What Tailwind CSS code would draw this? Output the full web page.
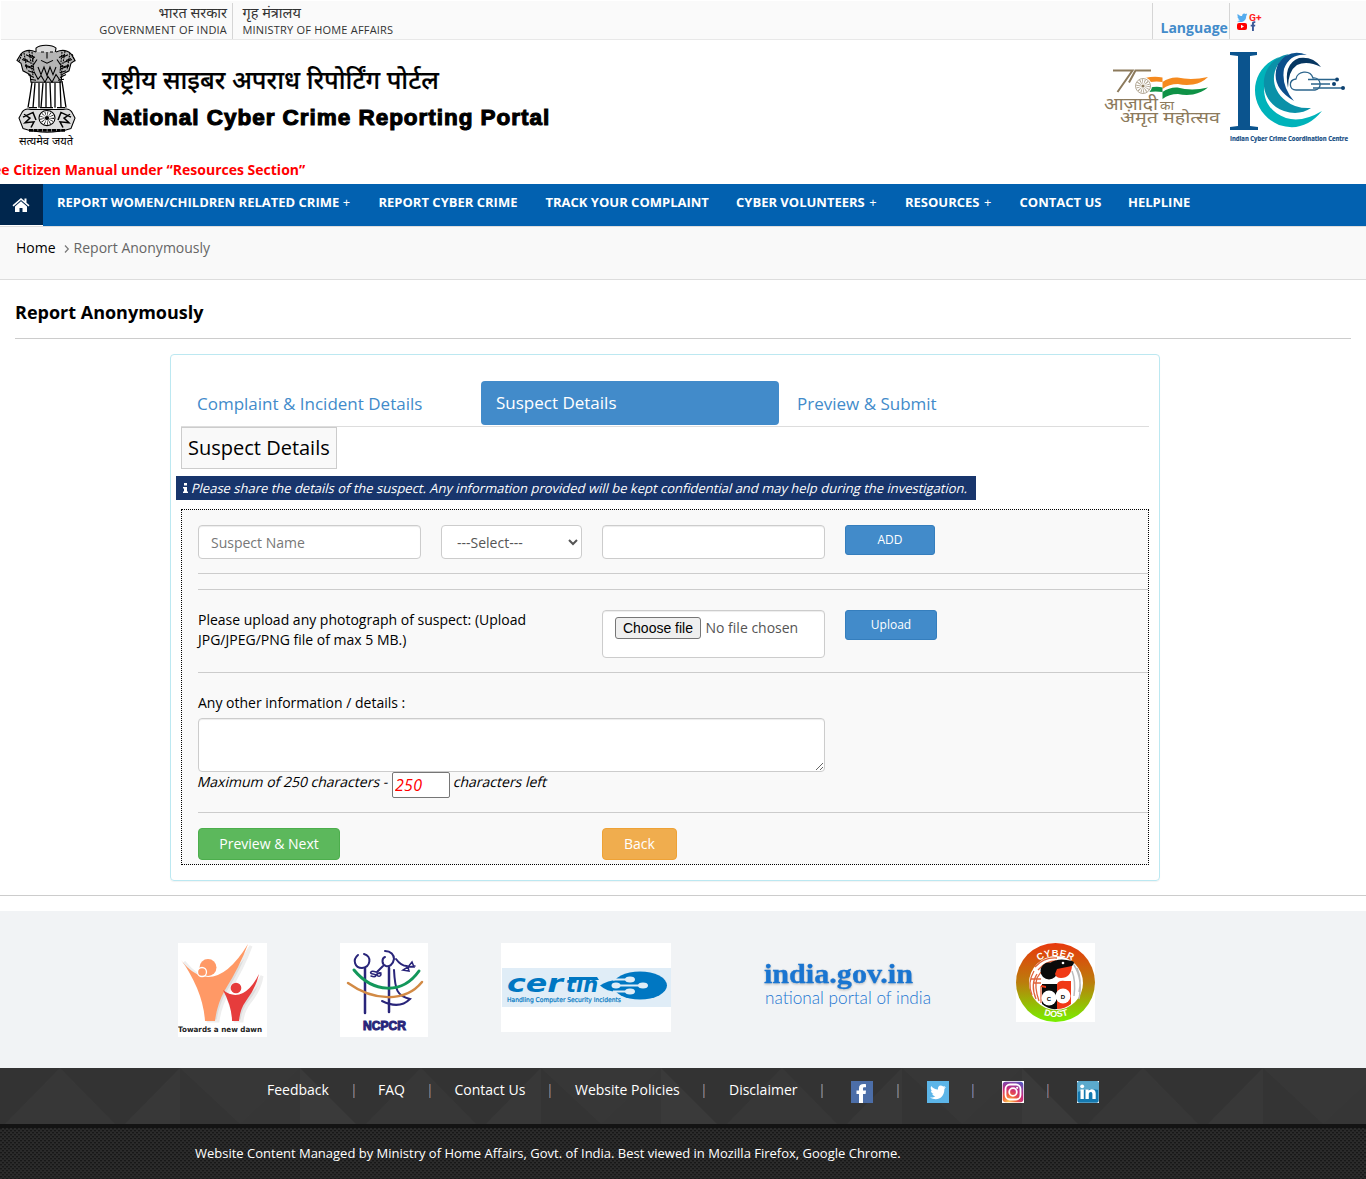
<!DOCTYPE html>
<html lang="en">
<head>
<meta charset="utf-8">
<title>National Cyber Crime Reporting Portal</title>
<script src="https://cdn.jsdelivr.net/npm/@tailwindcss/browser@4"></script>
</head>
<body class="bg-white font-['Open_Sans','Noto_Sans',sans-serif] text-sm text-black overflow-x-hidden">

<!-- Government strip -->
<div class="h-10 ml-px mt-0 border-b border-[#e8e8e8] bg-[#fafafa] flex text-[#333] text-[11px] leading-[17px] border-t border-t-white">
  <div class="w-[232px] mt-[2px] h-9 border-r border-[#d5d5d5] pr-[5px] text-right pt-[1px] whitespace-nowrap">
    <div class="text-[14.500px] leading-[17px]">भारत सरकार</div>
    <div class="tracking-[0.2px]">GOVERNMENT OF INDIA</div>
  </div>
  <div class="mt-[2px] pt-[1px] pl-[9.500px] w-[920px] border-r border-[#d5d5d5] h-9">
    <div class="text-[14.500px] leading-[17px]">गृह मंत्रालय</div>
    <div class="tracking-[0.2px]">MINISTRY OF HOME AFFAIRS</div>
  </div>
  <div class="mt-[2px] w-[77px] h-9 border-r border-[#d5d5d5] pl-[7.500px] pt-[15px] text-sm leading-5 font-bold text-[#428bca]">Language</div>
  <svg class="ml-[7px] mt-[11px]" width="26" height="20" viewBox="0 0 26 20">
    <path fill="#55acee" transform="translate(0 0.5) scale(.46)" d="M22 3.500l-2 1c.8-.6 1.500-1.500 1.800-2.500l-3 1A5 5 0 0 0 11 7.500C7 7.500 4 5.500 1.500 3c-1.200 2-.6 5 1.500 6.200L1 8.700c0 2.300 1.600 4.200 3.700 4.700H2.600c.6 1.900 2.300 3 4.400 3.100-2 1.500-4.300 2.200-7 2C9 23.500 20 19 20 8z"/>
    <text x="12" y="8.500" font-family="Roboto" font-weight="700" font-size="9.500" fill="#f22" textLength="12.500" lengthAdjust="spacingAndGlyphs">G+</text>
    <rect x="0" y="11" width="10" height="7" rx="2" fill="#f00"/><path d="M4 12.800l3 1.700-3 1.700z" fill="#fff"/>
    <path fill="#3b5998" d="M15 19v-4.500h-1.300v-1.800H15v-1.200c0-1.700 1-2.500 3.300-2.200v1.700c-1.200 0-1.400.2-1.400.8v.9h1.400l-.2 1.800h-1.200V19z"/>
  </svg>
</div>

<!-- Masthead -->
<header class="h-[117px] flex">
  <svg class="ml-[14px] mt-[3px] shrink-0" width="66" height="110" viewBox="0 0 66 110">
    <g fill="none" stroke="#000" stroke-width="1.100" transform="translate(0 .4) scale(1 .945)">
      <path d="M22 5q3-3 10-3t10 3l-1 6 2 5-3 6-5 2h-7l-5-2-3-6 2-5z" fill="#ddd"/>
      <path d="M22 9q-9-4-15 2l-4 7 4 3 2 8 7 4 1 8h30l1-8 7-4 2-8 4-3-4-7q-6-6-15-2" fill="#b5b5b5"/>
      <path d="M12 12l6 3m-10 2 8 3m-5 4 9 3m3-10-5 8m2-11-2 5M54 12l-6 3m10 2-8 3m5 4-9 3m-3-10 5 8M27 9h3m6 0h3M33 9v7m-6 2 6 3 6-3M24 25l3 8 3-8 3 9 3-9 3 8 3-8M20 30l4 8 3-4 4 7 3-6 4 6 4-8 4 6"/>
      <path d="M9 16l5 2m-3 5 6 2m-3 4 6 2m-5-19 6 3M57 16l-5 2m3 5-6 2m3 4-6 2m5-19-6 3M14 33l6 3m-4 2 6 1m24-3 6-3m-8 6 6-1"/>
      <path d="M5 19l3-8M10 10l3 18M15 8l4 26M18 9l2 22M61 19l-3-8M56 10l-3 18M51 8l-4 26M48 9l-2 22" stroke-dasharray="2 1"/>
      <path d="M18 41q-2 15-4 27m7-26-2 26m6-26v26m4-26-2 26m5-26v26m4-26 1 26m4-26v26m5-28 1 28m1-28q2 14 4 28M15 68h8m3 0h13m4 0h8" stroke-width="1.300"/>
      <path d="M8 73q3-5 9-3h32q6-2 9 3l3 6-4 11q-24 8-48 0L5 79z" fill="#ddd"/>
      <circle cx="33" cy="79" r="8" fill="#fff"/><circle cx="33" cy="79" r="4.500" stroke-dasharray=".6 1.500" stroke-width="5"/><circle cx="33" cy="79" r="1.500" fill="#000"/>
      <path d="M10 75l6 4-5 5 9-1-3 6m-8-11 10-5 3 8M56 75l-6 4 5 5-9-1 3 6m8-11-10-5-3 8" stroke-width="1.500"/>
      <path d="M15 92h36" stroke-width="3" stroke-dasharray="4 .6"/>
    </g>
    <text x="5" y="102" font-size="11" font-family="Noto Sans, sans-serif" textLength="54" lengthAdjust="spacingAndGlyphs">सत्यमेव जयते</text>
  </svg>
  <div class="ml-[22px] mt-[20px] w-[1002px]">
    <div class="text-[25.300px] leading-[38px] font-medium whitespace-nowrap [-webkit-text-stroke:0.2px_#000]">राष्ट्रीय साइबर अपराध रिपोर्टिंग पोर्टल</div>
    <div class="ml-px mt-[3px] text-[22.500px] leading-[34px] font-bold font-['Liberation_Sans',sans-serif] [-webkit-text-stroke:1.100px_#000] tracking-[0.970px] whitespace-nowrap">National Cyber Crime Reporting Portal</div>
  </div>
  <svg class="mt-6 shrink-0" width="118" height="66" viewBox="0 0 118 66">
    <path d="M9 6.500h19.500L13.500 28M47 6.500H31.500L25 18.500" fill="none" stroke="#8c7a5c" stroke-width="2"/>
    <path d="M41 14q9-2 17.500-.5V18q7-5 15-4.500 14 3 30.500-.5-6 6-15 7.500-8 1-15-.5-9 0-15.500 5V18q-6-1-12 0z" fill="#f58a1f"/>
    <path d="M45 24q7-2 13.500-.5V28q7-5 15-4.500 14 4 30.500 0-6 5-15 7-8 1-15-.5-9 0-15.500 5V28q-7-1-14 0z" fill="#0f9246"/>
    <circle cx="39" cy="22" r="9" fill="#fff"/><circle cx="39" cy="22" r="7.500" fill="#fff" stroke="#b5aa98" stroke-width="1"/><circle cx="39" cy="22" r="4.500" fill="none" stroke="#a89c86" stroke-width="4.500" stroke-dasharray=".7 1.300"/><circle cx="39" cy="22" r="1.600" fill="#8c7a5c"/>
    <g fill="#8c7a5c" font-family="Noto Sans, sans-serif">
      <text x="0" y="45.500" font-size="17" textLength="54" lengthAdjust="spacingAndGlyphs">आज़ादी</text>
      <text x="56" y="45.500" font-size="12" textLength="14" lengthAdjust="spacingAndGlyphs">का</text>
      <text x="16" y="59" font-size="16.500" textLength="100" lengthAdjust="spacingAndGlyphs">अमृत महोत्सव</text>
    </g>
  </svg>
  <svg class="ml-[7px] mt-[10px] shrink-0" width="122" height="96" viewBox="0 0 122 96">
    <path d="M1 2h27v3l-7 1v70l8 1v3H1v-3l8-1V6L1 5z" fill="#0b548e"/>
    <path d="M50 7C17 20 19 62 50 75q25 8 43-14-20 12-36 7C28 58 30 26 50 7z" fill="#00b3ba"/>
    <path d="M60 4C30 9 25 50 55 61q15 5 27-3-15 1-25-7C39 37 42 15 60 4z" fill="#0a91a8"/>
    <path d="M78 5Q60-2 49 14q-9 22 16 37-13-15-10-32Q61 3 78 5z" fill="#0c4f8c"/>
    <path d="M92 17Q84 6 70 8 54 14 59 38q0-17 9-23 10-5 24 2z" fill="#063661"/>
    <path d="M67 40c-7 0-8-10 0-11 1-8 14-10 17-1 8-1 10 11 2 12z" fill="#fff" stroke="#2b648c" stroke-width="1.300"/>
    <path d="M79 29.500h27M82 34h19M84 38h29" stroke="#2b648c" fill="none" stroke-width="1.300"/>
    <g fill="#0c4070"><circle cx="108" cy="29.500" r="2"/><circle cx="105" cy="34" r="2"/><circle cx="114" cy="38" r="2"/></g>
    <text x="1" y="91" font-family="Open Sans" font-size="6.600" font-weight="700" fill="#174f85" stroke="#174f85" stroke-width=".2" textLength="118" lengthAdjust="spacingAndGlyphs">Indian Cyber Crime Coordination Centre</text>
  </svg>
</header>
<div class="h-[27px] overflow-hidden pt-[3px] whitespace-nowrap font-bold text-sm leading-5 text-[#f00]"><span class="-ml-[7px]">ee Citizen Manual under “Resources Section”</span></div>

<!-- Main navigation -->
<nav class="h-[42px] bg-[#0261b0] flex text-white text-[13px] font-bold leading-[18px] whitespace-nowrap">
  <a class="w-[43px] bg-[#00264d] border-b border-white flex justify-center pt-[13px] pr-px">
    <svg width="18" height="16" viewBox="0 0 18 16" fill="#fff"><path d="M9 1 0.500 8.300l1 1.100L9 3l7.500 6.400 1-1.100-3-2.600V1.500h-2v2.600z"/><path d="M9 4.300 3 9.400V15h4.500v-4h3v4H15V9.400z"/></svg>
  </a>
  <a class="pl-[14px] pt-[9px] w-[321.500px]">REPORT WOMEN/CHILDREN RELATED CRIME <span class="font-normal">+</span></a>
  <a class="pl-[14px] pt-[9px] w-[167px]">REPORT CYBER CRIME</a>
  <a class="pl-[14px] pt-[9px] w-[190.500px]">TRACK YOUR COMPLAINT</a>
  <a class="pl-[14px] pt-[9px] w-[169px]">CYBER VOLUNTEERS <span class="font-normal ml-px">+</span></a>
  <a class="pl-[14px] pt-[9px] w-[114.500px]">RESOURCES <span class="font-normal ml-px">+</span></a>
  <a class="pl-[14px] pt-[9px] w-[108.500px]">CONTACT US</a>
  <a class="pl-[14px] pt-[9px]">HELPLINE</a>
</nav>

<div class="h-[54px] bg-[#f9f9f9] border-y border-[#ddd] pl-4 pt-[11px] leading-5 flex">
  <span>Home</span>
  <svg class="ml-2 mt-[7px] mr-1" width="6" height="8" viewBox="0 0 6 8"><path d="M1 .5l3.300 3.500L1 7.500" stroke="#777" fill="none" stroke-width="1.200"/></svg>
  <span class="text-[#666]">Report Anonymously</span>
</div>

<main>
  <h1 class="mx-[15px] h-[59px] border-b border-[#ccc] pt-5 text-lg leading-[25px] font-bold">Report Anonymously</h1>

  <section class="mt-[15px] ml-[170px] w-[990px] h-[527px] border border-[#bce8f1] rounded px-[10px] pt-[26px] shadow-[0_1px_1px_rgba(0,0,0,.05)]">
    <div class="h-[46px] border-b border-[#ddd] flex text-[17px] leading-6 text-[#428bca]">
      <a class="w-[300px] pl-4 pt-[11px]">Complaint &amp; Incident Details</a>
      <a class="w-[298px] h-11 rounded bg-[#428bca] text-white pl-[15px] pt-[10px]">Suspect Details</a>
      <a class="pl-[18px] pt-[11px]">Preview &amp; Submit</a>
    </div>
    <h2 class="w-[156px] h-[42px] border border-[#ccc] bg-[#f9f9f9] pl-[6px] pt-[6px] text-xl leading-7 whitespace-nowrap">Suspect Details</h2>
    <div class="-ml-[5px] mt-[7px] w-[800px] h-6 bg-[#18356c] text-white text-[13px] leading-6 pl-[7px] flex whitespace-nowrap">
      <svg class="mt-[7px] mr-[4px]" width="5" height="10" viewBox="0 0 5 10" fill="#fff"><path d="M1 0h3v2.500H1zM0 4h4v4.500h1V10H0V8.500h1v-3H0z"/></svg>
      <span class="-skew-x-[14deg]">Please share the details of the suspect. Any information provided will be kept confidential and may help during the investigation.</span>
    </div>

    <form class="mt-[9px] h-[356px] border border-dotted border-black bg-[#f9f9f9] pl-4 leading-5">
      <div class="h-[64px] pt-[15px] flex border-b border-[#ccc] items-start">
        <input class="w-[223px] h-[34px] rounded border border-[#ccc] bg-white px-3 placeholder:text-[#777] shadow-[inset_0_1px_1px_rgba(0,0,0,.075)]" placeholder="Suspect Name">
        <select class="ml-5 w-[141px] h-[34px] rounded border border-[#ccc] bg-white pl-[11px] pr-0 text-[#555]"><option>---Select---</option></select>
        <input class="ml-5 w-[223px] h-[34px] rounded border border-[#ccc] bg-white shadow-[inset_0_1px_1px_rgba(0,0,0,.075)]">
        <button type="button" class="ml-5 w-[90px] h-[30px] rounded-[3px] border border-[#357ebd] bg-[#428bca] text-white text-xs">ADD</button>
      </div>
      <div class="h-4 border-b border-[#ccc]"></div>
      <div class="h-[83px] pt-5 flex border-b border-[#ccc] items-start">
        <p class="w-[404px] pr-12">Please upload any photograph of suspect: (Upload JPG/JPEG/PNG file of max 5 MB.)</p>
        <div class="w-[223px] h-12 rounded border border-[#ccc] bg-white pl-3 pt-[6px] flex items-start text-[#555] shadow-[inset_0_1px_1px_rgba(0,0,0,.075)]">
          <button type="button" class="w-[86px] h-[22px] border border-[#767676] rounded-[3px] bg-[#efefef] text-black font-['Liberation_Sans',sans-serif] text-sm leading-5 whitespace-nowrap">Choose file</button>
          <span class="ml-[4.500px] mt-px">No file chosen</span>
        </div>
        <button type="button" class="ml-5 w-[92px] h-[30px] rounded-[3px] border border-[#357ebd] bg-[#428bca] text-white text-xs">Upload</button>
      </div>
      <div class="h-[140px] pt-5 border-b border-[#ccc]">
        <div>Any other information / details :</div>
        <textarea class="block mt-[5px] w-[627px] h-[54px] rounded border border-[#ccc] bg-white resize shadow-[inset_0_1px_1px_rgba(0,0,0,.075)]"></textarea>
        <div class="flex items-start">
          <span class="w-[194px] whitespace-nowrap -skew-x-[14deg]">Maximum of 250 characters -</span>
          <input class="w-[58px] h-[26px] border border-[#767676] rounded-[2px] bg-white text-[#f00] text-base italic px-[2px] tracking-[0.300px]" value="250">
          <span class="ml-1 -skew-x-[14deg]">characters left</span>
        </div>
      </div>
      <div class="flex pt-[15px]">
        <button type="button" class="w-[142px] h-8 rounded border border-[#4cae4c] bg-[#5cb85c] text-white">Preview &amp; Next</button>
        <button type="button" class="ml-[262px] w-[75px] h-8 rounded border border-[#eea236] bg-[#f0ad4e] text-white">Back</button>
      </div>
    </form>
  </section>
  <hr class="mt-[14px] border-t border-[#ccc]">
</main>

<!-- Partner sites -->
<div class="mt-[15px] h-[157px] bg-[#f1f3f5] pl-[178px] pt-8 flex items-start">
  <svg class="shrink-0" width="89" height="94" viewBox="0 0 89 94">
    <rect width="89" height="94" fill="#fff"/>
    <g transform="translate(3 2)" fill="#ddd" stroke="#eee" stroke-width="3"><path d="M27 76L22 49Q13 27 3 17q13 16 27 17Q50 34 70 1 62 23 47 47q-8 14-10 29z"/><path d="M54 76q-2-10-9-28 8 8 19 3 9-5 17-20-2 14-13 27-6 8-7 18z"/></g>
    <path d="M27 78Q26 62 19 45 11 27 3 17q12 16 27 17Q50 34 70 1 62 23 47 47q-8 14-10 31z" fill="#ff9966"/>
    <circle cx="30" cy="24.500" r="8.500" fill="#ff9966"/><circle cx="24" cy="29" r="4.500" fill="#ff9966" stroke="#fff" stroke-width="1.300"/>
    <path d="M54 78q0-14-9-31 10 8 20 3 9-5 16-19-3 14-13 27-6 8-7 20z" fill="#e63c3c"/><circle cx="58" cy="45" r="5.300" fill="#e63c3c"/>
    <text x="0" y="88.500" font-family="DejaVu Sans" font-size="7.500" font-weight="700" fill="#222" textLength="84" lengthAdjust="spacingAndGlyphs">Towards a new dawn</text>
  </svg>
  <svg class="ml-[73px] shrink-0" width="88" height="94" viewBox="0 0 88 94">
    <rect width="88" height="94" fill="#fff"/>
    <g fill="none" stroke="#29257a" stroke-width="2" stroke-linecap="round">
      <path d="M18 12c-6 5-3 13 4 13 9-1 10-12 2-14M45 8c6 0 9 4 9 8-1 6-5 8-8 7-5-2-4-8-1-9M54 27c1 20 3 26 16 29-8 8-18 7-28 2M43 23l-6 6M56 16q5 7 11 7"/>
      <path d="M36 29c-6-2-7 2-3 2 5 1 3 4-2 2m10-3c-5-1-5 4-1 3 3-2-1-4-5-1M68 24l4-5 2 5zM68 24l-5 3 6 1zM68 24l7-1" stroke-width="1.500"/>
      <path d="M25 25v45M49 25v44" stroke-width="2.500"/>
    </g>
    <path d="M14 27C33 50 62 52 79 28" fill="none" stroke="#13975b" stroke-width="3" stroke-linecap="round"/>
    <path d="M8 40C33 58 65 60 82 39" fill="none" stroke="#d28a45" stroke-width="2.500" stroke-linecap="round"/>
    <text x="23" y="87" font-family="Liberation Sans" font-size="12" font-weight="700" fill="#29257a" stroke="#29257a" stroke-width="1" textLength="43" lengthAdjust="spacingAndGlyphs">NCPCR</text>
  </svg>
  <svg class="ml-[73px] shrink-0" width="170" height="89" viewBox="0 0 170 89">
    <rect width="170" height="89" fill="#fff"/><rect x="1" y="25" width="169" height="39" fill="#e0edf7"/>
    <g fill="#0077c2" font-family="DejaVu Sans"><text x="6" y="49" font-size="24" font-weight="700" font-style="italic" textLength="56" lengthAdjust="spacingAndGlyphs">cer</text><text x="65" y="49" font-size="22" font-weight="700" font-style="italic" textLength="32" lengthAdjust="spacingAndGlyphs">tın</text>
    <path d="M68 34h28l2 3H68z"/>
    <text x="6" y="59" font-size="6.500" font-family="DejaVu Sans" stroke="#0077c2" stroke-width=".2" textLength="114" lengthAdjust="spacingAndGlyphs">Handling Computer Security Incidents</text></g>
    <ellipse cx="139" cy="42.500" rx="27" ry="14" fill="#0077c2"/><path d="M99 42.500q12-8 26-4v9q-16 4-26-5z" fill="#0077c2"/>
    <g stroke="#e0edf7" stroke-width="2" fill="#e0edf7"><path d="M112 36.500h17M116 42.500h26M112 48.500h17"/><ellipse cx="129" cy="36.500" rx="4" ry="2"/><ellipse cx="142" cy="42.500" rx="4" ry="2"/><ellipse cx="129" cy="48.500" rx="4" ry="2"/><ellipse cx="115" cy="42.500" rx="3.500" ry="2"/></g>
  </svg>
  <svg class="ml-[92px] mt-[14px] shrink-0" width="170" height="55" viewBox="0 0 170 55" fill="#1a75d1">
    <text x="1" y="26" class="drop-shadow-[0px_1px_1px_rgba(0,0,0,.25)]" font-family="Liberation Serif" font-size="28" font-weight="700" stroke="#1a75d1" stroke-width=".3" textLength="149" lengthAdjust="spacingAndGlyphs">india.gov.in</text>
    <text x="2" y="47" font-family="Lato" font-weight="300" font-size="17.500" textLength="166" lengthAdjust="spacingAndGlyphs">national portal of india</text>
  </svg>
  <svg class="ml-[83px] shrink-0" width="79" height="79" viewBox="0 0 79 79">
    <defs><linearGradient id="ring" x1="0" y1="0" x2="0" y2="1"><stop offset="0" stop-color="#e8380d"/><stop offset=".5" stop-color="#bb7d0c"/><stop offset="1" stop-color="#78f000"/></linearGradient>
    <path id="arcTop" d="M9.500 41a30 28 0 0 1 60 0"/><path id="arcBot" d="M5 41a35 33 0 0 0 70 0"/></defs>
    <rect width="79" height="79" fill="#fff"/><circle cx="39.500" cy="39.500" r="39.500" fill="url(#ring)"/><circle cx="40" cy="40" r="27" fill="#fff"/>
    <g fill="none" stroke="#e0643c" stroke-width="1.300"><path d="M16 52q-5-12 2-24M20 56q-6-15 1-25M23 58q-5-14-2-23l4-6M19 24q9-10 22-9M22 27q8-9 18-9M15 36h10M17 40h8M25 60V43"/></g>
    <g fill="none" stroke="#bbb" stroke-width="1.500"><path d="M58 22q9 14 5 34M61 25q5 12 2 24M56 28q4 10 2 25"/></g>
    <circle cx="33" cy="28" r="8.500" fill="#0a0a0a"/><path d="M34 20q8-6 22-2 4 1 0 5-6 4-14 4z" fill="#0a0a0a"/><path d="M41 26l15-3q-1 12-11 12-5 0-6-4z" fill="#f03a17"/><circle cx="47" cy="20" r="1.300" fill="#fff"/>
    <path d="M26 41h15v25q-8 1-15-5z" fill="#0a0a0a"/><path d="M41 41q2-4 8-3h6v23q-6 5-14 5z" fill="#f03a17"/><path d="M25 42l5 1v2l-5-1z" fill="#f03a17"/>
    <circle cx="33" cy="55" r="7.500" fill="#fff"/><circle cx="47" cy="53" r="7.500" fill="#fff"/>
    <g font-family="Liberation Sans" font-weight="700" text-anchor="middle"><text x="33" y="57.500" font-size="6">C</text><text x="47" y="55.500" font-size="6">D</text>
    <g fill="#fff" font-size="9.500" letter-spacing=".5"><text><textPath href="#arcTop" startOffset="50%">CYBER</textPath></text><text font-size="9" letter-spacing="0"><textPath href="#arcBot" startOffset="50%">DOST</textPath></text></g></g>
  </svg>
</div>

<footer class="text-white">
  <div class="relative h-[56px] bg-[#333]">
    <svg class="absolute inset-0" width="1366" height="56">
      <defs><pattern id="tri" width="361" height="56" patternUnits="userSpaceOnUse"><path d="M5 56 60 0l55 56z" fill="#373737"/><path d="M125 56 180 0v56z" fill="#383838"/><path d="M180 0h120l-60 56z" fill="#373737"/><path d="M180 0v56h60z" fill="#343434"/><path d="M240 56 300 0v56z" fill="#363636"/><path d="M300 0l56 56h-56z" fill="#3a3a3a"/></pattern></defs>
      <rect width="1366" height="56" fill="url(#tri)"/>
    </svg>
    <div class="relative flex pl-[267px] pt-3 leading-5 whitespace-nowrap">
      <a class="w-[86px]">Feedback</a><i class="w-[2px] h-[14px] mt-1 border-l border-[#5c6f86] bg-[#7a5a48]"></i>
      <a class="w-[74px] pl-[23px]">FAQ</a><i class="w-[2px] h-[14px] mt-1 border-l border-[#5c6f86] bg-[#7a5a48]"></i>
      <a class="w-[118px] pl-[23.500px]">Contact Us</a><i class="w-[2px] h-[14px] mt-1 border-l border-[#5c6f86] bg-[#7a5a48]"></i>
      <a class="w-[152px] pl-[24px]">Website Policies</a><i class="w-[2px] h-[14px] mt-1 border-l border-[#5c6f86] bg-[#7a5a48]"></i>
      <a class="w-[116px] pl-[24px]">Disclaimer</a><i class="w-[2px] h-[14px] mt-1 border-l border-[#5c6f86] bg-[#7a6a58]"></i>
      <a class="w-[74px] pl-[27.500px] pt-px"><svg width="22" height="22" viewBox="0 0 22 22"><rect width="22" height="22" fill="#4c6ea8"/><path d="M8 22v-9H5.500V9.500H8V7c0-3 2-4.300 7-3.800v3c-2.600-.2-3 .2-3 1.500v1.800h3l-.4 3.500H12V22z" fill="#fff"/></svg></a><i class="w-[2px] h-[14px] mt-1 border-l border-[#5c6f86] bg-[#7a6a58]"></i>
      <a class="w-[73px] pl-[27.500px] pt-px"><svg width="22" height="22" viewBox="0 0 22 22"><rect width="22" height="22" fill="#5cb5e8"/><path d="M19 6l-2 .5L18.300 5l-2 .6C13 3 10.500 5.500 11 8.500 8 8.500 6 7 4.200 5c-1 2-.4 4 1.100 5L4 9.600c0 2 1 3 2.700 3.500H5.300c.5 1.400 1.600 2 3 2.200-1.500 1-3 1.500-5.300 1.200C10 20.500 17.500 17 17.400 8z" fill="#fff"/></svg></a><i class="w-[2px] h-[14px] mt-1 border-l border-[#5c6f9a] bg-[#6a5a58]"></i>
      <a class="w-[73px] pl-[27.500px] pt-px"><svg width="22" height="22" viewBox="0 0 22 22"><defs><radialGradient id="ig" cx=".3" cy="1" r="1.150"><stop offset="0" stop-color="#fed25c"/><stop offset=".3" stop-color="#f2613a"/><stop offset=".6" stop-color="#c8297e"/><stop offset="1" stop-color="#5259c4"/></radialGradient></defs><rect width="22" height="22" fill="#fff"/><rect x=".7" y=".7" width="20.600" height="20.600" rx="3" fill="url(#ig)"/><g fill="none" stroke="#fff" stroke-width="1.800"><rect x="3.500" y="3.500" width="15" height="15" rx="4.500"/><circle cx="11" cy="11" r="3.800"/></g><circle cx="15.200" cy="6.800" r="1.100" fill="#fff"/></svg></a><i class="w-[2px] h-[14px] mt-1 border-l border-[#5c6f86] bg-[#7a5048]"></i>
      <a class="pl-[27.500px] pt-px"><svg width="22" height="22" viewBox="0 0 22 22"><rect width="22" height="22" fill="#fff"/><rect x=".3" y=".3" width="21.400" height="21.400" rx="2" fill="#1479b0"/><path d="M.3 2.500Q.5.500 2.500.3h17q2 .2 2.200 2V9Q11 7 .3 11z" fill="#5ba9cc"/><g fill="#fff"><circle cx="5.200" cy="5.300" r="1.900"/><path d="M3.500 8.500h3.300V18H3.500zM8.500 8.500h3.200v1.300c2-2.500 7-2 7 2.400V18h-3.300v-5c0-2.800-3.600-2.600-3.600 0v5H8.500z"/></g></svg></a>
    </div>
  </div>
  <div class="relative h-[55px] bg-[#2b2b2b] border-t-4 border-[#131313]">
    <svg class="absolute inset-0" width="1366" height="51"><defs><pattern id="weave" width="4" height="4" patternUnits="userSpaceOnUse"><path d="M0 0h2v1H0zM2 2h2v1H2z" fill="#181818"/><path d="M0 1h2v1H0zM2 3h2v1H2z" fill="#242424"/></pattern></defs><rect width="1366" height="51" fill="url(#weave)"/></svg>
    <p class="relative pl-[195px] pt-[15px] text-[13px] leading-5">Website Content Managed by Ministry of Home Affairs, Govt. of India. Best viewed in Mozilla Firefox, Google Chrome.</p>
  </div>
</footer>
</body>
</html>
